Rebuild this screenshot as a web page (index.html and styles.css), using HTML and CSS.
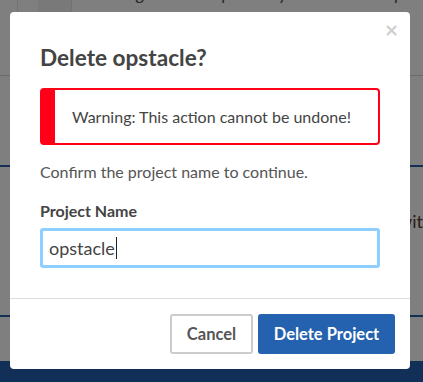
FILE: index.html
```html
<!DOCTYPE html>
<html lang="en">
<head>
<meta charset="utf-8">
<title>Delete opstacle?</title>
<link rel="stylesheet" href="styles.css">
</head>
<body>
<div class="page">
  <div class="page-row first">
    <div class="thumb-col"></div>
    <div class="thumb"></div>
    <p class="desc">A dangerous and probably broken SMTP proxy that does things</p>
  </div>
  <div class="page-rule gray"></div>
  <div class="page-rule blue r1"></div>
  <p class="page-text">with</p>
  <div class="page-rule blue r2"></div>
  <div class="page-band"></div>
</div>

<div class="overlay">
  <div class="modal" role="dialog">
    <div class="modal-header">
      <h2 class="modal-title">Delete opstacle?</h2>
      <button class="close" type="button">×</button>
    </div>
    <div class="modal-body">
      <div class="alert">Warning: This action cannot be undone!</div>
      <p class="confirm">Confirm the project name to continue.</p>
      <label class="label" for="pname">Project Name</label>
      <div class="input"><span class="input-text">opstacle</span><span class="caret"></span></div>
    </div>
    <div class="modal-footer">
      <button class="btn btn-default" type="button">Cancel</button>
      <button class="btn btn-primary" type="button">Delete Project</button>
    </div>
  </div>
</div>
</body>
</html>
```

FILE: styles.css
```css
* { box-sizing: border-box; }

html, body {
  margin: 0;
  padding: 0;
  height: 100%;
  overflow: hidden;
}

body {
  font-family: Lato, "Open Sans", sans-serif;
  background: #fff;
  color: #444;
}

/* background page */
.page {
  height: 382px;
  display: flex;
  flex-direction: column;
}

.page-row.first {
  display: flex;
  align-items: flex-start;
  height: 91px;
  margin-top: -16px;
}

.thumb-col {
  width: 18px;
  height: 76px;
  border-right: 1px solid #e4e4e4;
  margin-right: 20px;
  flex: none;
}

.thumb {
  width: 34px;
  height: 70px;
  background: #f2f2f2;
  border-right: 1px solid #e6e6e6;
  flex: none;
  margin-right: 21px;
}

.desc {
  margin: -1px 0 0;
  font-style: italic;
  font-size: 18px;
  line-height: 20px;
  color: #555;
  white-space: nowrap;
}

.page-rule.gray {
  height: 1px;
  background: #d6d6d6;
}

.page-rule.blue {
  height: 2px;
  background: #2461ae;
}

.page-rule.r1 { margin-top: 89px; }

.page-text {
  margin: 44px 0 0 398px;
  font-size: 18px;
  line-height: 20px;
  color: #5a3a2a;
  white-space: nowrap;
}

.page-rule.r2 { margin-top: 84px; }

.page-band {
  margin-top: 44px;
  flex: 1;
  background: #2461ae;
}

/* overlay */
.overlay {
  position: fixed;
  inset: 0;
  background: rgba(0, 0, 0, 0.5);
}

.modal {
  width: 400px;
  margin: 12px 0 0 10px;
  background: #fff;
  border-radius: 4px;
}

.modal-header {
  position: relative;
  padding: 31px 30px 0;
}

.modal-title {
  margin: 0;
  font-size: 22.6px;
  line-height: 29px;
  font-weight: 700;
  color: #444;
}

.close {
  position: absolute;
  top: 8px;
  right: 11px;
  padding: 0;
  border: 0;
  background: none;
  font-family: "DejaVu Sans", sans-serif;
  font-size: 18px;
  line-height: 20px;
  font-weight: 700;
  color: #cfcfcf;
}

.modal-body {
  padding: 16px 30px 30px;
}

.alert {
  height: 57px;
  border: 2px solid #ff0019;
  border-left-width: 15px;
  border-radius: 4px;
  padding: 0 17px;
  font-size: 16px;
  line-height: 53px;
  color: #444;
  white-space: nowrap;
}

.confirm {
  margin: 15px 0 0;
  font-size: 16px;
  line-height: 24px;
  color: #555;
}

.label {
  display: block;
  margin-top: 15px;
  font-size: 16px;
  line-height: 24px;
  font-weight: 700;
  color: #444;
}

.input {
  display: flex;
  align-items: center;
  margin-top: 5px;
  height: 40px;
  border: 3px solid #8ecfff;
  border-radius: 3px;
  padding: 0 6px;
  font-size: 18px;
  color: #444;
}

.caret {
  width: 1px;
  height: 22px;
  background: #222;
  margin-left: 1px;
}

.modal-footer {
  display: flex;
  justify-content: flex-end;
  gap: 5px;
  padding: 15px;
  border-top: 1px solid #ddd;
}

.btn {
  height: 40px;
  border-radius: 3px;
  font-family: Lato, "Open Sans", sans-serif;
  font-size: 16.5px;
  font-weight: 700;
  padding: 0;
  white-space: nowrap;
}

.btn-default {
  width: 83px;
  background: #fff;
  border: 2px solid #ccc;
  color: #555;
}

.btn-primary {
  width: 137px;
  background: #2461ae;
  border: 2px solid #2461ae;
  color: #fff;
}
```
